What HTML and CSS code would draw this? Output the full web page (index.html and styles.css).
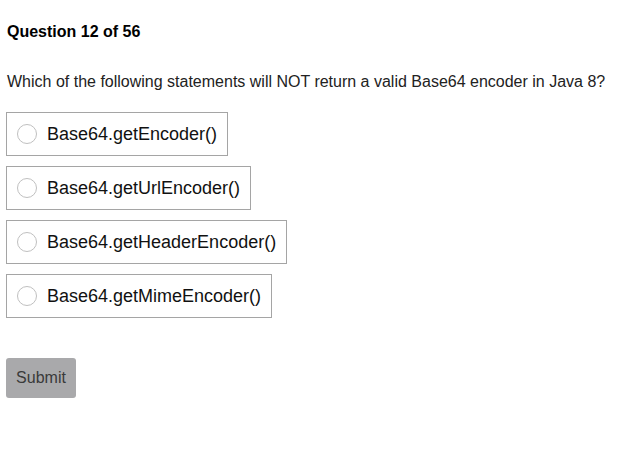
FILE: index.html
```html
<!DOCTYPE html>
<html>
<head>
<meta charset="utf-8">
<link rel="stylesheet" href="styles.css">
</head>
<body>
<div class="quiz">
  <h2 class="quiz-title">Question 12 of 56</h2>
  <p class="quiz-question">Which of the following statements will NOT return a valid Base64 encoder in Java 8?</p>
  <div class="options">
    <label class="option"><span class="radio"></span><span class="option-text">Base64.getEncoder()</span></label>
    <label class="option"><span class="radio"></span><span class="option-text">Base64.getUrlEncoder()</span></label>
    <label class="option"><span class="radio"></span><span class="option-text">Base64.getHeaderEncoder()</span></label>
    <label class="option"><span class="radio"></span><span class="option-text">Base64.getMimeEncoder()</span></label>
  </div>
  <button class="submit">Submit</button>
</div>
</body>
</html>
```
FILE: styles.css
```css
html, body {
  margin: 0;
  padding: 0;
  background: #fff;
}
body {
  font-family: "Liberation Sans", Arial, sans-serif;
  color: #000;
}
.quiz {
  padding: 22px 6px 0 6px;
  display: flex;
  flex-direction: column;
  align-items: flex-start;
}
.quiz-title {
  margin: 0 0 0 1px;
  font-size: 16px;
  font-weight: bold;
  line-height: 20px;
}
.quiz-question {
  margin: 30px 0 0 1px;
  font-size: 16px;
  line-height: 20px;
  color: #222;
}
.options {
  margin-top: 20px;
  display: flex;
  flex-direction: column;
  align-items: flex-start;
  gap: 10px;
}
.option {
  display: flex;
  align-items: center;
  height: 42px;
  border: 1px solid #a5a5a5;
  padding: 0 10px 0 10px;
  gap: 10px;
  cursor: pointer;
}
.radio {
  width: 18px;
  height: 18px;
  border: 1px solid #c0c0c0;
  border-radius: 50%;
  background: #fff;
  flex: none;
}
.option-text {
  font-size: 18px;
  color: #111;
}
.submit {
  margin-top: 40px;
  width: 70px;
  height: 40px;
  border: none;
  border-radius: 3px;
  background: #a9a9ab;
  color: #3a3a3a;
  font-family: "Liberation Sans", Arial, sans-serif;
  font-size: 16px;
  padding: 0;
}
```
